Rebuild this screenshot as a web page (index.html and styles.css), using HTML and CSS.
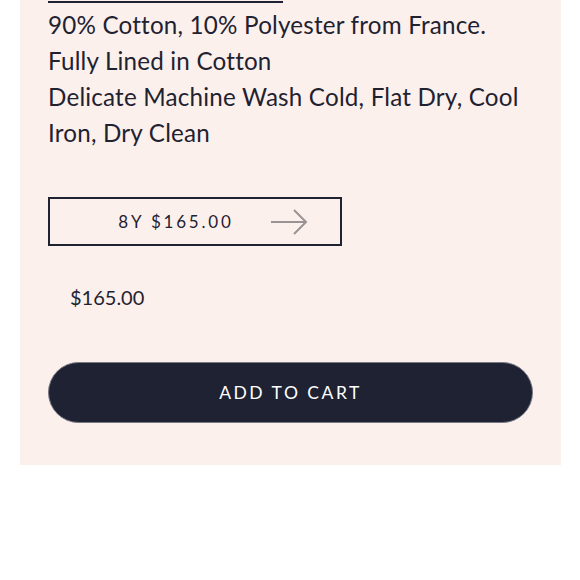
FILE: index.html
```html
<!DOCTYPE html>
<html>
<head>
<meta charset="utf-8">
<link rel="stylesheet" href="styles.css">
</head>
<body>
<section class="panel">
  <div class="rule"></div>
  <div class="details">
    <p>90% Cotton, 10% Polyester from France.</p>
    <p>Fully Lined in Cotton</p>
    <p>Delicate Machine Wash Cold, Flat Dry, Cool Iron, Dry Clean</p>
  </div>
  <button class="variant">
    <span class="variant-label">8Y $165.00</span>
    <svg class="arrow" width="38" height="26" viewBox="0 0 38 26"><path d="M1 13H36M24 1L36 13L24 25" fill="none" stroke="#9a9394" stroke-width="2"/></svg>
  </button>
  <div class="price">$165.00</div>
  <button class="cart">ADD TO CART</button>
</section>
</body>
</html>
```
FILE: styles.css
```css
html, body { margin: 0; padding: 0; background: #fff; }
body { font-family: "Lato", "Open Sans", sans-serif; color: #1f2230; }
.panel {
  margin: 0 19px 0 20px;
  background: #fcf0ed;
  padding: 0 28px 43px 28px;
  height: 422px;
  box-sizing: content-box;
}
.rule { width: 235px; height: 2px; background: #1f2230; position: relative; top: 1px; }
.details { padding-top: 5px; font-size: 24.2px; line-height: 36px; letter-spacing: 0.2px; }
.details p { margin: 0; }
.variant {
  margin-top: 46px;
  width: 294px; height: 49px;
  border: 2px solid #1f2230; background: transparent;
  display: flex; align-items: center; justify-content: center; gap: 36px;
  padding: 0 0 0 36px; box-sizing: border-box;
  font-family: inherit; color: #1f2230;
}
.variant-label { font-size: 17px; letter-spacing: 2.8px; }
.arrow { display: block; }
.price { margin: 39px 0 0 22px; font-size: 20px; }
.cart {
  margin-top: 53px; width: 485px; height: 61px;
  border-radius: 31px; border: 1px solid #777a85; background: #1e2232; color: #fff;
  font-family: inherit; font-size: 17.5px; letter-spacing: 2.5px; display: block;
}
```
